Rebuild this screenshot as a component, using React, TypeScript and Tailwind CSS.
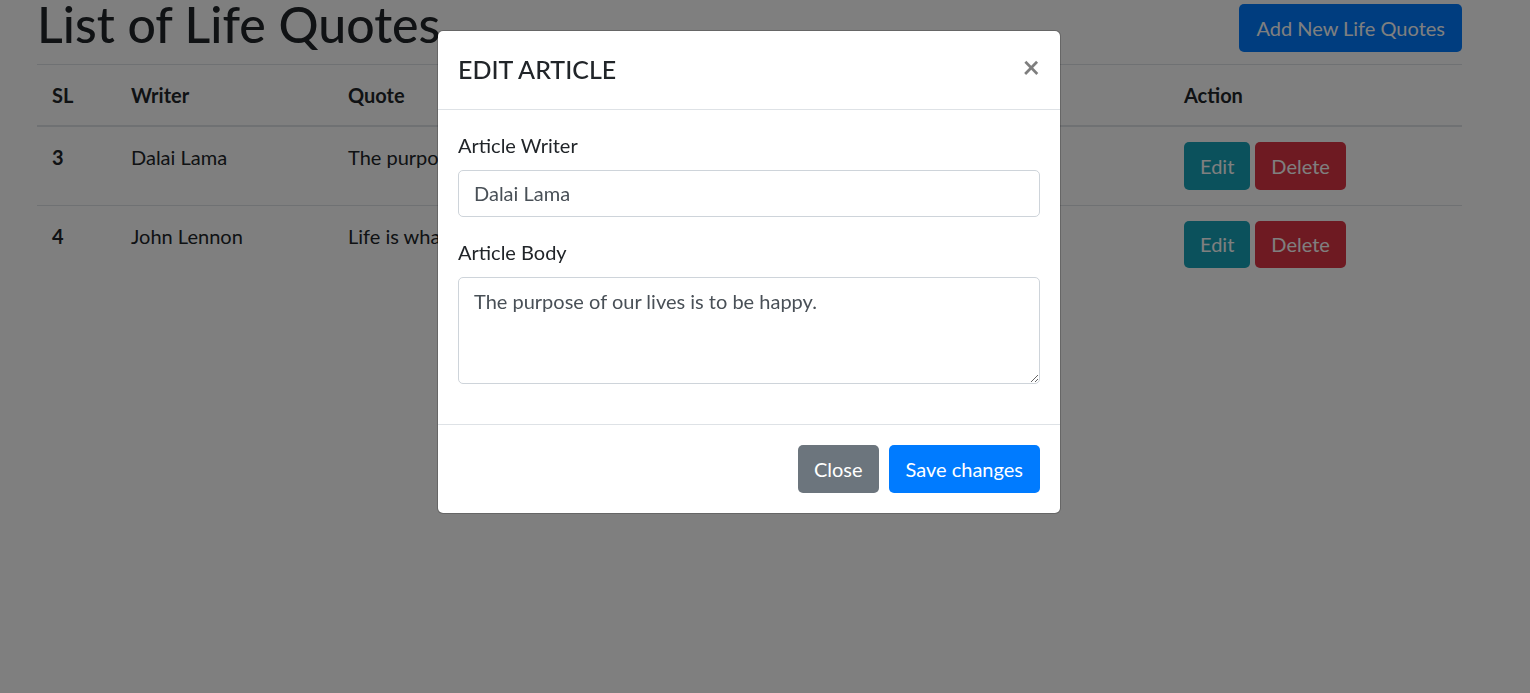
const quotes = [
  { sl: 3, writer: 'Dalai Lama', quote: 'The purpose of our lives is to be happy.' },
  { sl: 4, writer: 'John Lennon', quote: "Life is what happens when you're busy making other plans." },
];

function QuoteTable() {
  return (
    <table className="w-full border-collapse text-left">
      <thead>
        <tr>
          <th className="w-[79px] border-t border-b-2 border-[#dee2e6] p-[15px] align-bottom font-bold">SL</th>
          <th className="w-[217px] border-t border-b-2 border-[#dee2e6] p-[15px] align-bottom font-bold">Writer</th>
          <th className="border-t border-b-2 border-[#dee2e6] p-[15px] align-bottom font-bold">Quote</th>
          <th className="w-[293px] border-t border-b-2 border-[#dee2e6] p-[15px] align-bottom font-bold">Action</th>
        </tr>
      </thead>
      <tbody>
        {quotes.map((q) => (
          <tr key={q.sl}>
            <th className="border-t border-[#dee2e6] p-[15px] align-top font-bold">{q.sl}</th>
            <td className="border-t border-[#dee2e6] p-[15px] align-top">{q.writer}</td>
            <td className="border-t border-[#dee2e6] p-[15px] align-top">{q.quote}</td>
            <td className="border-t border-[#dee2e6] p-[15px] align-top">
              <div className="flex gap-[5px]">
                <button className="h-[47.5px] rounded-[5px] bg-[#17a2b8] px-[16px] text-white">Edit</button>
                <button className="h-[47.5px] rounded-[5px] bg-[#dc3545] px-[16px] text-white">Delete</button>
              </div>
            </td>
          </tr>
        ))}
      </tbody>
    </table>
  );
}

function EditModal() {
  return (
    <div className="fixed inset-0 bg-black/50">
      <div className="ml-[437px] mt-[30px] w-[624px] rounded-[6px] border border-black/20 bg-white bg-clip-padding">
        <div className="flex items-start border-b border-[#dee2e6] p-[20px]">
          <h5 className="text-[25px] font-medium leading-[37.5px]">EDIT ARTICLE</h5>
          <button className="-m-[20px] ml-auto p-[20px] text-[30px] font-bold leading-none text-black opacity-50">
            ×
          </button>
        </div>
        <div className="p-[20px]">
          <div className="mb-[20px]">
            <label className="mb-[10px] block">Article Writer</label>
            <input
              defaultValue="Dalai Lama"
              className="block h-[47.5px] w-full rounded-[5px] border border-[#ced4da] px-[15px] py-[7.5px] text-[#495057] outline-none"
            />
          </div>
          <div className="mb-[20px]">
            <label className="mb-[10px] block">Article Body</label>
            <textarea
              rows={3}
              defaultValue="The purpose of our lives is to be happy."
              className="block h-[107px] w-full rounded-[5px] border border-[#ced4da] px-[15px] py-[7.5px] text-[#495057] outline-none"
            />
          </div>
        </div>
        <div className="flex justify-end gap-[10px] border-t border-[#dee2e6] p-[20px]">
          <button className="h-[47.5px] rounded-[5px] bg-[#6c757d] px-[16px] text-white">Close</button>
          <button className="h-[47.5px] rounded-[5px] bg-[#007bff] px-[17px] text-white">Save changes</button>
        </div>
      </div>
    </div>
  );
}

export default function App() {
  return (
    <div className="relative min-h-[693px] bg-white font-[Lato,sans-serif] text-[20px] leading-[1.5] text-[#212529]">
      <div className="ml-[37px] w-[1425px]">
        <div className="flex items-start justify-between">
          <h1 className="mb-[16px] text-[50px] font-medium leading-[48px]">List of Life Quotes</h1>
          <button className="mt-[4px] h-[47.5px] rounded-[5px] bg-[#007bff] px-[17px] text-white">
            Add New Life Quotes
          </button>
        </div>
        <QuoteTable />
      </div>
      <EditModal />
    </div>
  );
}
